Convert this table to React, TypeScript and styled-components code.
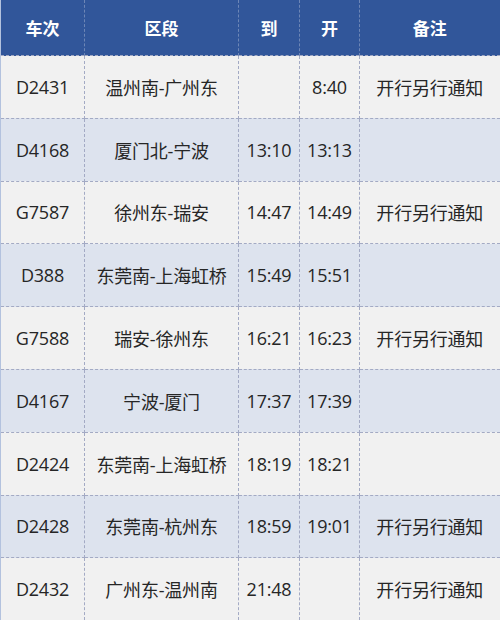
import React from 'react';
import styled, { createGlobalStyle } from 'styled-components';

type Train = {
  no: string;
  section: string;
  arrive: string;
  depart: string;
  note: string;
};

const trains: Train[] = [
  { no: 'D2431', section: '温州南-广州东', arrive: '', depart: '8:40', note: '开行另行通知' },
  { no: 'D4168', section: '厦门北-宁波', arrive: '13:10', depart: '13:13', note: '' },
  { no: 'G7587', section: '徐州东-瑞安', arrive: '14:47', depart: '14:49', note: '开行另行通知' },
  { no: 'D388', section: '东莞南-上海虹桥', arrive: '15:49', depart: '15:51', note: '' },
  { no: 'G7588', section: '瑞安-徐州东', arrive: '16:21', depart: '16:23', note: '开行另行通知' },
  { no: 'D4167', section: '宁波-厦门', arrive: '17:37', depart: '17:39', note: '' },
  { no: 'D2424', section: '东莞南-上海虹桥', arrive: '18:19', depart: '18:21', note: '' },
  { no: 'D2428', section: '东莞南-杭州东', arrive: '18:59', depart: '19:01', note: '开行另行通知' },
  { no: 'D2432', section: '广州东-温州南', arrive: '21:48', depart: '', note: '开行另行通知' },
];

const columns = [
  { label: '车次', width: 84 },
  { label: '区段', width: 154 },
  { label: '到', width: 61 },
  { label: '开', width: 60 },
  { label: '备注', width: 141 },
];

const App: React.FC = () => {
  return (
    <>
      <GlobalStyle />
      <Table>
        <colgroup>
          {columns.map((c) => (
            <col key={c.label} style={{ width: c.width }} />
          ))}
        </colgroup>
        <thead>
          <tr>
            {columns.map((c) => (
              <HeadCell key={c.label}>{c.label}</HeadCell>
            ))}
          </tr>
        </thead>
        <tbody>
          {trains.map((t, i) => (
            <Row key={t.no} $striped={i % 2 === 1}>
              <Cell>{t.no}</Cell>
              <Cell>{t.section}</Cell>
              <Cell>{t.arrive}</Cell>
              <Cell>{t.depart}</Cell>
              <Cell>{t.note}</Cell>
            </Row>
          ))}
        </tbody>
      </Table>
    </>
  );
};

export default App;

const GlobalStyle = createGlobalStyle`
  html, body {
    margin: 0;
    padding: 0;
    background: #ffffff;
  }
  body {
    font-family: "Open Sans", "Noto Sans CJK SC", sans-serif;
  }
`;

const Table = styled.table`
  width: 500px;
  table-layout: fixed;
  border-collapse: collapse;
  border-left: 1px solid #b3c2de;
  border-right: 2px solid #b3c2de;
  border-bottom: 2px solid #b3c2de;
`;

const HeadCell = styled.th`
  height: 55px;
  padding: 0;
  background: #31569a;
  color: #ffffff;
  font-family: "Noto Sans CJK SC", sans-serif;
  font-size: 17px;
  font-weight: 700;
  text-align: center;
  border-left: 1px dashed #6d86b6;
  &:first-child {
    border-left: none;
  }
`;

const Row = styled.tr<{ $striped: boolean }>`
  height: 62.8px;
  background: ${(p) => (p.$striped ? '#dde3ee' : '#f1f1f1')};
`;

const Cell = styled.td`
  padding: 0;
  text-align: center;
  vertical-align: middle;
  color: #262626;
  font-family: "Open Sans", "Noto Sans CJK SC", sans-serif;
  font-size: 18px;
  letter-spacing: -0.2px;
  white-space: nowrap;
  border: 1px dashed #a3aac4;
`;
